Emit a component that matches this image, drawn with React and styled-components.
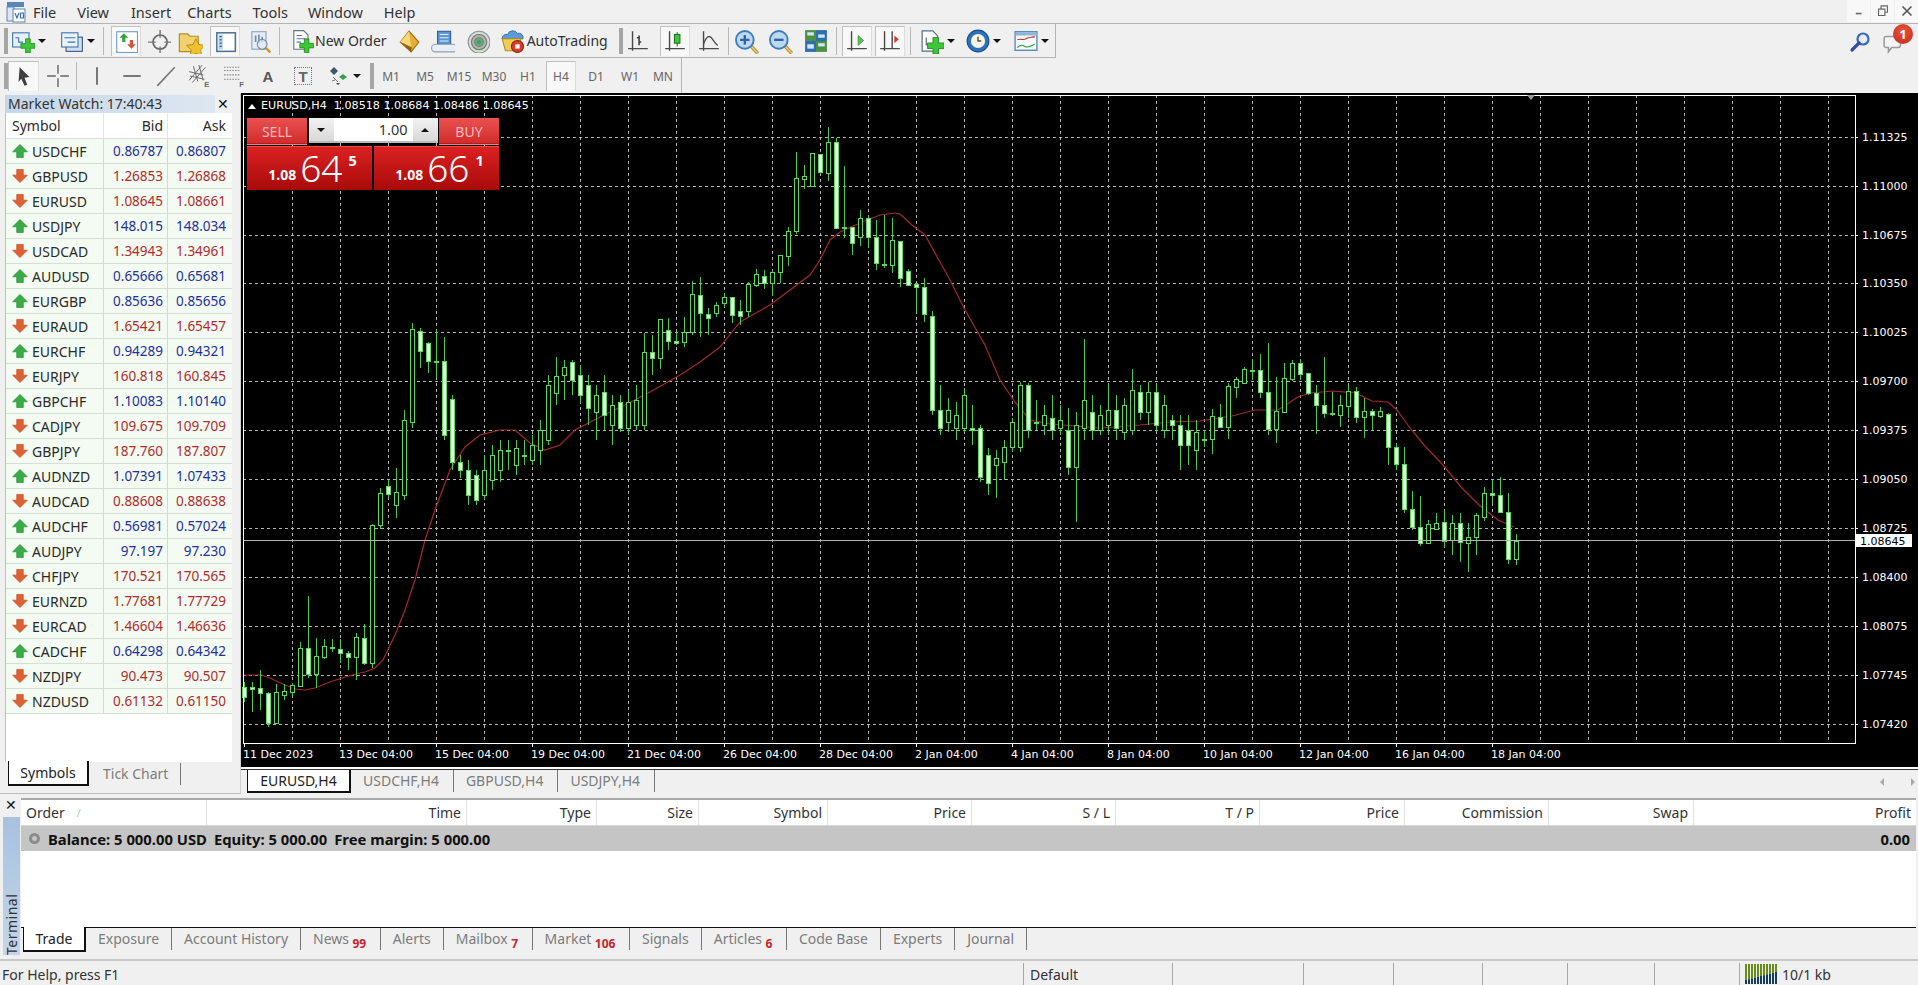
import React from 'react';
import styled, { createGlobalStyle } from 'styled-components';

const GlobalStyle = createGlobalStyle`
  html, body {
    margin: 0;
    padding: 0;
    background: #f0f0f0;
    overflow: hidden;
  }
  * {
    box-sizing: border-box;
  }
`;

const Page = styled.div`
  width: 1918px;
  height: 985px;
  display: flex;
  flex-direction: column;
  overflow: hidden;
  background: #f0f0f0;
  color: #222;
  font-family: 'Noto Sans', 'Open Sans', sans-serif;
  font-size: 14px;
`;

/* menu */
const MenuBar = styled.div`
  height: 24px;
  display: flex;
  align-items: center;
  padding-left: 5px;
  border-bottom: 1px solid #b4b4b4;
`;

const MenuItem = styled.span`
  font-size: 14.5px;
  color: #333;
  margin-left: ${(p) => p.$ml}px;
  line-height: 22px;
`;

const WindowButtons = styled.div`
  margin-left: auto;
  display: flex;
  gap: 1px;
  align-self: flex-start;
`;

const WindowButton = styled.div`
  width: 23px;
  height: 22px;
  background: #f8f8f8;
  display: flex;
  align-items: center;
  justify-content: center;
`;

/* toolbars */
const ToolRow = styled.div`
  height: ${(p) => p.$h}px;
  display: flex;
`;

const Toolbar = styled.div`
  width: ${(p) => p.$w}px;
  display: flex;
  align-items: center;
  border-right: 1px solid #b4b4b4;
  border-bottom: ${(p) => (p.$last ? '0' : '1px solid #b4b4b4')};
`;

const Grip = styled.div`
  width: 4px;
  height: 26px;
  margin-left: ${(p) => p.$ml || 0}px;
  background-image: radial-gradient(#a0a0a0 0.7px, transparent 0.8px);
  background-size: 2px 2px;
`;

const Sep = styled.div`
  width: 1px;
  height: 28px;
  margin-left: ${(p) => p.$ml || 0}px;
  background: #b8b8b8;
`;

const ToolButton = styled.div`
  width: ${(p) => p.$w || 30}px;
  height: 30px;
  flex: none;
  margin-left: ${(p) => p.$ml || 0}px;
  display: flex;
  align-items: center;
  justify-content: center;
  color: #666;
  font-size: 12px;
  background: ${(p) => (p.$on ? '#f8f8f8' : 'transparent')};
  border-top: 1px solid ${(p) => (p.$on ? '#c0c0c0' : 'transparent')};
  border-left: 1px solid ${(p) => (p.$on ? '#c0c0c0' : 'transparent')};
  border-right: 1px solid ${(p) => (p.$on ? '#dcdcdc' : 'transparent')};
`;

const DropButton = styled(ToolButton)`
  width: 41px;
  gap: 3px;
`;

const LabelButton = styled.div`
  height: 30px;
  flex: none;
  margin-left: ${(p) => p.$ml}px;
  padding: 0 4px;
  display: flex;
  align-items: center;
  gap: ${(p) => p.$gap}px;
  color: #333;
  font-size: 14px;
  white-space: nowrap;
`;

const Caret = styled.span`
  width: 0;
  height: 0;
  flex: none;
  border-left: 4px solid transparent;
  border-right: 4px solid transparent;
  border-top: 4px solid #111;
`;

const RightTools = styled.div`
  margin-left: auto;
  width: 69px;
  display: flex;
  align-items: center;
  gap: 12px;
  padding-top: 2px;
`;

const ChatWrap = styled.div`
  position: relative;
  width: 24px;
  height: 24px;
`;

const Badge = styled.div`
  position: absolute;
  left: 10px;
  top: -6px;
  width: 20px;
  height: 20px;
  border-radius: 50%;
  background: radial-gradient(circle at 50% 35%, #e8553c, #c3281c);
  color: #fff;
  font-size: 13px;
  font-weight: 700;
  display: flex;
  align-items: center;
  justify-content: center;
`;

/* main area */
const Main = styled.div`
  height: 705px;
  display: flex;
`;

const WatchPanel = styled.div`
  width: 241px;
  height: 701px;
  flex: none;
  padding: 2px 8px 0 5px;
  display: flex;
  flex-direction: column;
  border-bottom: 1px solid #bdbdbd;
  border-right: 1px solid #d0d0d0;
`;

const WatchTitle = styled.div`
  height: 18px;
  display: flex;
  align-items: center;
  justify-content: space-between;
  font-size: 14px;
  color: #333;
`;

const TitleFill = styled.div`
  width: 210px;
  height: 18px;
  padding-left: 3px;
  line-height: 18px;
  background: linear-gradient(90deg, #c5d6e8, #dde7f1);
`;

const CloseMark = styled.span`
  font-size: 14px;
  line-height: 14px;
  color: #111;
  margin-right: 3px;
`;

const WatchBody = styled.div`
  flex: 1;
  background: #fff;
  border-left: 1px solid #c0c0c0;
`;

const WatchRow = styled.div`
  display: grid;
  grid-template-columns: 98px 64px 1fr;
  height: ${(p) => (p.$head ? 26 : 25)}px;
  background: ${(p) => (p.$head ? '#fff' : '#f3fbf3')};
  border-bottom: 1px solid ${(p) => (p.$head ? '#dcdcdc' : '#d4e0d4')};
`;

const SymbolCell = styled.div`
  display: flex;
  align-items: center;
  gap: 3px;
  padding-left: ${(p) => (p.$head ? 6 : 5)}px;
  border-right: 1px solid ${(p) => (p.$head ? '#e6e6e6' : '#cfdccf')};
  color: #2a2a2a;
`;

const PriceCell = styled.div`
  display: flex;
  align-items: center;
  justify-content: flex-end;
  padding-right: ${(p) => (p.$ask ? 6 : 4)}px;
  font-size: ${(p) => (p.$head ? 14 : 13.5)}px;
  color: ${(p) => (p.$head ? '#2a2a2a' : p.$up ? '#24309a' : '#b02c2c')};
  border-right: ${(p) => (p.$ask ? '0' : '1px solid')} ${(p) => (p.$head ? '#e6e6e6' : '#cfdccf')};
`;

const TabStrip = styled.div`
  height: ${(p) => p.$h}px;
  flex: none;
  display: flex;
  align-items: ${(p) => (p.$top ? 'flex-start' : 'center')};
  padding-left: ${(p) => p.$pl || 0}px;
  border-top: ${(p) => (p.$line ? '1px solid #111' : '0')};
`;

const ActiveTab = styled.div`
  width: ${(p) => p.$w}px;
  height: ${(p) => p.$h}px;
  margin-top: -1px;
  flex: none;
  background: #fff;
  color: #222;
  display: flex;
  align-items: center;
  justify-content: center;
  border-left: 1px solid #111;
  border-right: 2px solid #111;
  border-bottom: 2px solid #111;
`;

const Tab = styled.div`
  height: 22px;
  margin-top: ${(p) => p.$mt || 0}px;
  padding: 0 ${(p) => p.$pr || 12}px 0 ${(p) => p.$pl || 12}px;
  flex: none;
  display: flex;
  align-items: flex-start;
  line-height: 22px;
  color: #7c7c7c;
  border-right: 1px solid #777;
  white-space: nowrap;
`;

const RedCount = styled.sup`
  color: #c4262e;
  font-size: 12px;
  font-weight: 700;
  line-height: 1;
  margin: 10px 1.5px 0 3.5px;
  vertical-align: baseline;
`;

const ChartColumn = styled.div`
  flex: 1;
  min-width: 0;
  display: flex;
  flex-direction: column;
`;

const ChartFrame = styled.div`
  position: relative;
  height: 677px;
  background: #000;
  border-bottom: 1px solid #333;
  box-shadow: inset 0 -2px 0 #fff;
`;

const ChartSvg = styled.svg`
  display: block;
`;

const ChartHeading = styled.div`
  position: absolute;
  left: 7px;
  top: 6px;
  display: flex;
  align-items: center;
  gap: 5px;
  color: #fff;
  font-family: 'DejaVu Sans', sans-serif;
  font-size: 11.15px;
  line-height: 14px;
  white-space: pre;
`;

const HeadingArrow = styled.span`
  width: 0;
  height: 0;
  border-left: 4px solid transparent;
  border-right: 4px solid transparent;
  border-bottom: 5px solid #fff;
`;

const ChartTabs = styled.div`
  flex: none;
  height: 24px;
  display: flex;
  padding-left: 6px;
`;

const ChartTabsNav = styled.div`
  margin-left: auto;
  width: 35px;
  margin-right: 3px;
  display: flex;
  justify-content: space-between;
  align-items: center;
`;

const NavArrow = styled.span`
  width: 0;
  height: 0;
  border-top: 4px solid transparent;
  border-bottom: 4px solid transparent;
  ${(p) => (p.$left ? 'border-right: 4px solid #aaa;' : 'border-left: 4px solid #aaa;')}
`;

/* one click trading overlay */
const TradePanel = styled.div`
  position: absolute;
  left: 6px;
  top: 25px;
  width: 251px;
  display: grid;
  grid-template-columns: 125px 125px;
  column-gap: 2px;
  row-gap: 1px;
  font-family: 'Noto Sans', sans-serif;
`;

const TradeTop = styled.div`
  grid-column: 1 / 3;
  height: 27px;
  display: flex;
  justify-content: space-between;
  align-items: flex-start;
`;

const SideButton = styled.div`
  width: 60px;
  height: 27px;
  background: linear-gradient(#ea5151, #d22a2a);
  color: #fbbcbc;
  font-size: 14px;
  display: flex;
  align-items: center;
  justify-content: center;
  border-bottom: 1px solid #f08080;
  box-shadow: inset 0 -1px 0 #b81c1c;
`;

const LotBox = styled.div`
  width: 129px;
  height: 25px;
  display: flex;
  background: #fff;
  color: #333;
  font-size: 14.5px;
  border-bottom: 2px solid #bbb;
`;

const LotStep = styled.div`
  width: 25px;
  background: linear-gradient(#f2f2f2, #d8d8d8);
  display: flex;
  align-items: center;
  justify-content: center;
`;

const LotStepArrow = styled.span`
  width: 0;
  height: 0;
  border-left: 4px solid transparent;
  border-right: 4px solid transparent;
  ${(p) => (p.$up ? 'border-bottom: 4px solid #111;' : 'border-top: 4px solid #111;')}
`;

const LotValue = styled.div`
  flex: 1;
  text-align: right;
  padding-right: 5px;
  line-height: 23px;
`;

const QuoteBox = styled.div`
  height: 44px;
  background: linear-gradient(#dc2222, #a80a0a);
  color: #fff;
  display: flex;
  align-items: flex-start;
  justify-content: center;
  padding-left: 6px;
  box-shadow: inset 0 1px 0 #e64a4a;
`;

const QuoteSmall = styled.span`
  font-size: 14px;
  font-weight: 700;
  margin-top: 20px;
  line-height: 18px;
`;

const QuoteBig = styled.span`
  font-size: 37px;
  font-weight: 300;
  line-height: 44px;
  margin: 0 6px 0 4px;
`;

const QuoteSup = styled.span`
  font-size: 14.5px;
  font-weight: 700;
  line-height: 14px;
  margin-top: 7px;
`;

/* terminal */
const Terminal = styled.div`
  height: 161px;
  display: flex;
`;

const TerminalRail = styled.div`
  width: 21px;
  flex: none;
  padding-left: 3px;
  display: flex;
  flex-direction: column;
`;

const RailClose = styled.div`
  height: 19px;
  line-height: 14px;
  font-size: 14px;
  padding-left: 2px;
  color: #111;
`;

const RailTitle = styled.div`
  width: 17px;
  height: 138px;
  background: linear-gradient(#c4d6ea, #a7c1de);
  writing-mode: vertical-rl;
  transform: rotate(180deg);
  line-height: 17px;
  font-size: 14px;
  letter-spacing: 0.5px;
  color: #333;
`;

const TerminalMain = styled.div`
  flex: 1;
  min-width: 0;
  display: flex;
  flex-direction: column;
  border-top: 2px solid #a8a8a8;
  margin-right: 2px;
`;

const OrdersHead = styled.div`
  height: 26px;
  flex: none;
  display: flex;
  background: #fff;
  border-bottom: 1px solid #d8d8d8;
`;

const OrdersCol = styled.div`
  width: ${(p) => p.$w}px;
  flex: ${(p) => (p.$grow ? 1 : 'none')};
  display: flex;
  align-items: center;
  justify-content: ${(p) => (p.$left ? 'flex-start' : 'flex-end')};
  padding: 0 5px;
  color: #333;
  border-right: ${(p) => (p.$grow ? '0' : '1px solid #e2e2e2')};
`;

const SortMark = styled.span`
  margin-left: 12px;
  color: #bbb;
  font-size: 11px;
`;

const BalanceRow = styled.div`
  height: 25px;
  flex: none;
  display: flex;
  align-items: center;
  padding: 0 6px 0 8px;
  background: #c5c5c5;
  font-weight: 700;
  color: #111;
  font-size: 14.8px;
`;

const BalanceDot = styled.span`
  width: 11px;
  height: 11px;
  border-radius: 50%;
  margin-right: 8px;
  border: 3px solid #8c8c8c;
  background: #c5c5c5;
`;

const BalanceText = styled.span`
  margin-right: 7px;
`;

const BalanceProfit = styled.span`
  margin-left: auto;
`;

const OrdersBlank = styled.div`
  flex: 1;
  background: #fff;
`;

/* status bar */
const StatusBar = styled.div`
  height: 26px;
  flex: none;
  display: flex;
  border-top: 2px solid #c8c8c8;
  align-items: flex-end;
`;

const StatusCell = styled.div`
  width: ${(p) => p.$w}px;
  height: 22px;
  flex: ${(p) => (p.$grow ? 1 : 'none')};
  display: flex;
  align-items: center;
  gap: 5px;
  padding-left: ${(p) => p.$pl}px;
  border-right: ${(p) => (p.$end ? '0' : '1px solid #a8a8a8')};
  color: #333;
  white-space: nowrap;
`;

/* icons */
const Ico = styled.svg`
  display: block;
  flex: none;
`;

const I = ({ children, s = 22 }) => (
  <Ico width={s} height={s} viewBox="0 0 22 22">
    {children}
  </Ico>
);

const Plus = ({ x = 9, y = 9, s = 12 }) => (
  <path
    d={`M${x + s / 3} ${y}h${s / 3}v${s / 3}h${s / 3}v${s / 3}h${-s / 3}v${s / 3}h${-s / 3}v${-s / 3}h${-s / 3}v${-s / 3}h${s / 3}z`}
    fill="#3fc53a"
    stroke="#1b8a1b"
    strokeWidth="0.7"
  />
);

const AppLogo = () => (
  <I>
    <rect x="2" y="1" width="17" height="5" fill="#5a85b8" />
    <rect x="2" y="6" width="7" height="14" fill="#dfe8f2" stroke="#5a85b8" />
    <rect x="8" y="8" width="12" height="13" fill="#fff" stroke="#5a85b8" />
    <path d="M10 12l2 5 2-5M15.500 12h3v5h-3z" fill="none" stroke="#3c6ea6" strokeWidth="1.200" />
  </I>
);
const NewChartIcon = () => (
  <I s={24}>
    <rect x="1.500" y="3.500" width="15" height="13" fill="#e7f0f9" stroke="#3f74ad" />
    <path d="M4 8h3v4h4" fill="none" stroke="#3f74ad" />
    <Plus x={9} y={9} s={13} />
  </I>
);
const ProfilesIcon = () => (
  <I s={24}>
    <rect x="5.500" y="7.500" width="15" height="13" fill="#cfdff0" stroke="#39587e" />
    <rect x="1.500" y="3.500" width="15" height="13" fill="#e9f1f9" stroke="#3f74ad" />
    <path d="M4 8h10M7 12h7" stroke="#3f74ad" />
  </I>
);
const WatchIcon = () => (
  <I s={24}>
    <rect x="2.500" y="2.500" width="19" height="19" fill="#fff" stroke="#6f9bc8" />
    <path d="M9 4l4 4h-2.500v4h-3V8H5z" fill="#35a53a" />
    <path d="M14.500 10h3v4H20l-4 4-4-4h2.500z" fill="#d2563c" />
  </I>
);
const NavIcon = () => (
  <I s={24}>
    <circle cx="12" cy="12" r="6.500" fill="none" stroke="#6a6a6a" strokeWidth="1.600" />
    <path d="M12 1v7M12 16v7M1 12h7M16 12h7" stroke="#757575" strokeWidth="1.300" />
  </I>
);
const StarFolderIcon = () => (
  <I s={26}>
    <path d="M2 5h7l2 2h7v13H2z" fill="#f1d26f" stroke="#b18e2a" />
    <path d="M16 9l2.500 5 5.500.7-4 3.800 1 5.500-5-2.700-5 2.700 1-5.500-4-3.800 5.500-.7z" fill="#f0c12e" stroke="#a88417" strokeWidth="0.700" />
  </I>
);
const TerminalIcon = () => (
  <I s={24}>
    <rect x="3.500" y="3.500" width="17" height="17" fill="#fff" stroke="#4d6f94" strokeWidth="1.400" />
    <rect x="5" y="5" width="4" height="14" fill="#bcd2e8" />
    <path d="M6 7h2M6 10h2M6 13h2M6 16h2" stroke="#2b5d91" strokeWidth="1.200" />
  </I>
);
const TesterIcon = () => (
  <I s={24}>
    <rect x="3.500" y="2.500" width="13" height="16" fill="#e6edf5" stroke="#8aa3bd" />
    <path d="M7 6v6M10 5v8M13 7v5" stroke="#6b8bab" strokeWidth="1.500" />
    <circle cx="13" cy="14" r="4.500" fill="#dce9f6" fillOpacity="0.700" stroke="#7a8da0" />
    <path d="M16.500 17.500l4 4" stroke="#c99a2e" strokeWidth="2.200" />
  </I>
);
const NewOrderIcon = () => (
  <I s={24}>
    <path d="M3.500 1.500h9l4 4v13h-13z" fill="#fdfdfd" stroke="#66707c" />
    <path d="M6 6h5M6 9h8M6 12h4" stroke="#5a7fa6" />
    <Plus x={9} y={9} s={12.500} />
  </I>
);
const EditorIcon = () => (
  <I s={24}>
    <path d="M11 2l9 10-7 9-10-9z" fill="#e5ad36" stroke="#9a6d13" />
    <path d="M11 2l-8 10 10 4z" fill="#f6d878" />
    <path d="M3 12l10 9 .500-4z" fill="#8e5f10" />
  </I>
);
const CloudBookIcon = () => (
  <I s={24}>
    <path d="M6 2h12v12H6z" fill="#5f96cf" stroke="#2c5f9c" />
    <path d="M8 5h8M8 8h8M8 11h8" stroke="#dcebf8" />
    <path d="M4 21a3.500 3.500 0 0 1 0-7h16a3.500 3.500 0 0 1 0 7z" fill="#e8eef4" stroke="#8aa0b5" />
  </I>
);
const SignalIcon = () => (
  <I s={24}>
    <circle cx="12" cy="12" r="10" fill="#d8dcd8" stroke="#8c948c" />
    <circle cx="12" cy="12" r="7" fill="#aeb6ae" stroke="#707870" />
    <circle cx="12" cy="12" r="4" fill="#7f9f85" stroke="#5f8f6a" />
    <circle cx="12" cy="12" r="2" fill="#3aa55a" />
  </I>
);
const AutoIcon = () => (
  <I s={24}>
    <path d="M7 5a5 5 0 0 1 9-1 4 4 0 0 1 5 5H2a4 4 0 0 1 5-4z" fill="#5d9bd6" stroke="#2d66a8" strokeWidth="0.800" />
    <path d="M2 9h17l-2 11H5z" fill="#f0cd55" stroke="#b08a22" />
    <circle cx="16" cy="16" r="5.500" fill="#dc3a2a" stroke="#8f1d12" />
    <rect x="14" y="14" width="4" height="4" fill="#fff" />
  </I>
);
const Axes = () => <path d="M6 2v18M2 18h18" stroke="#4a4a4a" strokeWidth="1.300" fill="none" />;
const BarIcon = () => (
  <I s={24}>
    <Axes />
    <path d="M12 6v9M10 8h2M12 12h2" stroke="#3a3a3a" strokeWidth="1.400" />
  </I>
);
const CandleIcon = () => (
  <I s={24}>
    <Axes />
    <path d="M13 3v13" stroke="#1a7a1a" />
    <rect x="10.500" y="5" width="5" height="8" fill="#43c243" stroke="#1a7a1a" />
  </I>
);
const LineIcon = () => (
  <I s={24}>
    <Axes />
    <path d="M6 14c3-9 6-8 8-5s3 5 5 6" stroke="#4a4a4a" strokeWidth="1.200" fill="none" />
  </I>
);
const ZoomIcon = ({ plus }) => (
  <I s={26}>
    <path d="M15 15l6 6.500" stroke="#b99433" strokeWidth="3" />
    <path d="M15 15l6 6.500" stroke="#ecd383" strokeWidth="1" />
    <circle cx="10" cy="10" r="7.500" fill="#bcd9f2" stroke="#3e7cc0" strokeWidth="1.600" />
    <path d={plus ? 'M6 10h8M10 6v8' : 'M6 10h8'} stroke="#2d62a5" strokeWidth="2" />
  </I>
);
const TileIcon = () => (
  <I s={24}>
    <rect x="1" y="1" width="10" height="10" fill="#4f8f44" />
    <rect x="11" y="1" width="10" height="10" fill="#2e6fb2" />
    <rect x="1" y="11" width="10" height="10" fill="#2e6fb2" />
    <rect x="11" y="11" width="10" height="10" fill="#4f8f44" />
    <rect x="3" y="3" width="6" height="3" fill="#cfe6f5" />
    <rect x="13" y="5" width="6" height="3" fill="#cfe6f5" />
    <rect x="3" y="14" width="6" height="4" fill="#cfe6f5" />
    <rect x="13" y="13" width="6" height="3" fill="#cfe6f5" />
  </I>
);
const ScrollIcon = () => (
  <I s={24}>
    <Axes />
    <path d="M12 6l5 4.500-5 4.500z" fill="#54c254" stroke="#2a8f2a" strokeWidth="0.600" />
  </I>
);
const ShiftIcon = () => (
  <I s={24}>
    <Axes />
    <path d="M13 2v16" stroke="#4a4a4a" strokeWidth="1.300" />
    <path d="M15 6l4 3.500-4 3.500z" fill="#d8342c" />
  </I>
);
const TemplateIcon = () => (
  <I s={26}>
    <path d="M3.500 2.500h9l4 4v13h-13z" fill="#fdfdfd" stroke="#5f6a75" />
    <path d="M7 8v6h5" fill="none" stroke="#666" />
    <Plus x={8} y={8} s={14} />
  </I>
);
const ClockIcon = () => (
  <I s={24}>
    <circle cx="11" cy="11" r="10" fill="#2e72bd" stroke="#1d4f8f" />
    <circle cx="11" cy="11" r="6.500" fill="#f8f6e8" />
    <path d="M11 7v4h3" stroke="#6c4a20" strokeWidth="1.300" fill="none" />
  </I>
);
const IndicatorIcon = () => (
  <I s={24}>
    <rect x="1" y="2.500" width="20" height="17" fill="#f6fafc" stroke="#4f85b5" strokeWidth="1.200" />
    <rect x="1.500" y="3" width="19" height="3" fill="#8fb6da" />
    <path d="M3 10c3-2 5 1 8-1s5-1 8-2" stroke="#c0392b" fill="none" />
    <path d="M3 17c3-2 4-3 7-1s6-1 9-2" stroke="#2f9a3f" fill="none" />
  </I>
);
const PointerIcon = () => (
  <I s={24}>
    <path d="M7 3l9 9-4.500 .500 2.500 6.500-2.500 1-3-6.500-2.500 3z" fill="#3f3f3f" />
  </I>
);
const CrossIcon = () => (
  <I s={24}>
    <path d="M11 1v8M11 13v8M1 11h8M13 11h8" stroke="#666" strokeWidth="1.300" />
  </I>
);
const VLineIcon = () => (
  <I s={24}>
    <path d="M11 3v16" stroke="#666" strokeWidth="1.600" />
  </I>
);
const HLineIcon = () => (
  <I s={24}>
    <path d="M3 11h16" stroke="#666" strokeWidth="1.600" />
  </I>
);
const TrendIcon = () => (
  <I s={24}>
    <path d="M3 20L19 3" stroke="#777" strokeWidth="1.500" />
  </I>
);
const SmallLetter = styled.text`
  font-family: 'Liberation Sans', sans-serif;
  font-weight: 700;
  font-size: 7px;
  fill: #666;
`;
const ChannelIcon = () => (
  <I s={24}>
    <path d="M1 15L13 1M4 17L16 3M1 7l13 3M2 11l13 3M5 2l4 14M10 1l4 14" stroke="#6a6a6a" strokeWidth="0.900" />
    <SmallLetter x="15" y="21">E</SmallLetter>
  </I>
);
const FiboIcon = () => (
  <I s={24}>
    <path d="M1 3h15M1 6h15M1 10h15M1 14h15" stroke="#8a8a8a" strokeDasharray="1.500 1" />
    <SmallLetter x="15" y="21">F</SmallLetter>
  </I>
);
const TextLabelIcon = styled.span`
  font-family: 'Liberation Sans', sans-serif;
  font-weight: 700;
  font-size: 15px;
  color: #555;
`;
const TextBoxIcon = styled.span`
  width: 18px;
  height: 18px;
  border: 1px dotted #777;
  display: flex;
  align-items: center;
  justify-content: center;
  font-family: 'Liberation Sans', sans-serif;
  font-weight: 700;
  font-size: 15px;
  color: #666;
  line-height: 1;
`;
const ArrowsIcon = () => (
  <I s={22}>
    <path d="M2 6l4-4 4 4-4 4z" fill="#3f5568" />
    <path d="M11 12l4-3 4 3-4 3z" fill="#37a050" />
    <path d="M5 12l5 5M7 15l-3 1" stroke="#777" />
    <path d="M8 18l2 2 2-2z" fill="#444" />
  </I>
);
const SearchIcon = () => (
  <I s={22}>
    <circle cx="14" cy="8" r="5.500" fill="#e6effa" stroke="#3a66c0" strokeWidth="2.200" />
    <path d="M10 12l-7 7" stroke="#33509f" strokeWidth="3.200" strokeLinecap="round" />
  </I>
);
const ChatIcon = () => (
  <I s={24}>
    <path d="M3 6h11a2 2 0 0 1 2 2v6a2 2 0 0 1-2 2H8l-3 4v-4H3a2 2 0 0 1-2-2V8a2 2 0 0 1 2-2z" fill="#f3f3f3" stroke="#9a9a9a" strokeWidth="1.400" />
  </I>
);
const ArrowMark = ({ up }) => (
  <I s={18}>
    {up ? (
      <path d="M11 3l9 9h-5v7H7v-7H2z" fill="#3bab45" stroke="#1f8a31" strokeWidth="0.800" />
    ) : (
      <path d="M7 3h8v7h5l-9 9-9-9h5z" fill="#de6134" stroke="#bf4a22" strokeWidth="0.800" />
    )}
  </I>
);
const RateBars = () => (
  <Ico width="32" height="20" viewBox="0 0 32 20">
    {[0, 1, 2, 3, 4, 5, 6, 7, 8, 9, 10].map((i) => (
      <g key={i}>
        <rect x={i * 3} y="0" width="2" height={8 + (10 - i) * 0.8} fill="#6b8a1c" />
        <rect x={i * 3} y={8 + (10 - i) * 0.8} width="2" height={12 - (10 - i) * 0.8} fill="#123d5c" />
      </g>
    ))}
  </Ico>
);

/* data */
const rows = [
  ['USDCHF', '0.86787', '0.86807', 1],
  ['GBPUSD', '1.26853', '1.26868', 0],
  ['EURUSD', '1.08645', '1.08661', 0],
  ['USDJPY', '148.015', '148.034', 1],
  ['USDCAD', '1.34943', '1.34961', 0],
  ['AUDUSD', '0.65666', '0.65681', 1],
  ['EURGBP', '0.85636', '0.85656', 1],
  ['EURAUD', '1.65421', '1.65457', 0],
  ['EURCHF', '0.94289', '0.94321', 1],
  ['EURJPY', '160.818', '160.845', 0],
  ['GBPCHF', '1.10083', '1.10140', 1],
  ['CADJPY', '109.675', '109.709', 0],
  ['GBPJPY', '187.760', '187.807', 0],
  ['AUDNZD', '1.07391', '1.07433', 1],
  ['AUDCAD', '0.88608', '0.88638', 0],
  ['AUDCHF', '0.56981', '0.57024', 1],
  ['AUDJPY', '97.197', '97.230', 1],
  ['CHFJPY', '170.521', '170.565', 0],
  ['EURNZD', '1.77681', '1.77729', 0],
  ['EURCAD', '1.46604', '1.46636', 0],
  ['CADCHF', '0.64298', '0.64342', 1],
  ['NZDJPY', '90.473', '90.507', 0],
  ['NZDUSD', '0.61132', '0.61150', 0],
];

const priceLabels = [
  '1.11325', '1.11000', '1.10675', '1.10350', '1.10025', '1.09700', '1.09375',
  '1.09050', '1.08725', '1.08400', '1.08075', '1.07745', '1.07420',
];

const timeLabels = [
  '11 Dec 2023', '13 Dec 04:00', '15 Dec 04:00', '19 Dec 04:00', '21 Dec 04:00',
  '26 Dec 04:00', '28 Dec 04:00', '2 Jan 04:00', '4 Jan 04:00', '8 Jan 04:00',
  '10 Jan 04:00', '12 Jan 04:00', '16 Jan 04:00', '18 Jan 04:00',
];

// white body, body top, body bottom, high, low (page y)
const candles = [
  [1, 687, 697, 682, 702], [1, 687, 689, 682, 712], [1, 688, 693, 670, 710], [1, 693, 723, 692, 727],
  [0, 692, 723, 684, 724], [0, 691, 695, 684, 700], [0, 685, 692, 683, 697], [0, 648, 686, 642, 687],
  [1, 648, 674, 596, 678], [0, 656, 674, 638, 688], [0, 646, 657, 639, 659], [1, 647, 648, 639, 652],
  [1, 649, 653, 639, 663], [1, 653, 657, 651, 670], [0, 637, 657, 633, 680], [1, 638, 663, 624, 665],
  [0, 525, 663, 524, 668], [0, 493, 525, 488, 529], [1, 486, 494, 480, 498], [0, 492, 505, 468, 518],
  [0, 420, 495, 410, 500], [0, 329, 422, 323, 428], [1, 331, 351, 328, 368], [1, 343, 361, 342, 373],
  [1, 361, 362, 330, 378], [1, 361, 435, 337, 440], [1, 399, 462, 395, 470], [1, 462, 470, 455, 478],
  [1, 470, 495, 460, 505], [1, 475, 500, 470, 505], [0, 470, 495, 455, 500], [0, 455, 480, 445, 490],
  [0, 450, 470, 440, 482], [1, 450, 451, 440, 470], [0, 448, 465, 440, 475], [1, 455, 456, 440, 465],
  [0, 445, 460, 435, 465], [0, 430, 450, 420, 465], [0, 385, 440, 375, 445], [0, 376, 393, 357, 405],
  [0, 367, 375, 360, 400], [1, 362, 380, 360, 395], [1, 375, 395, 365, 402], [1, 385, 408, 375, 425],
  [0, 395, 412, 385, 440], [1, 392, 415, 375, 430], [0, 405, 425, 395, 445], [1, 402, 428, 395, 432],
  [0, 402, 428, 390, 435], [0, 400, 425, 385, 430], [0, 352, 425, 333, 430], [1, 352, 358, 335, 375],
  [0, 319, 358, 319, 369], [1, 330, 341, 318, 350], [1, 341, 343, 332, 345], [0, 332, 342, 317, 347],
  [0, 294, 332, 281, 335], [1, 295, 313, 277, 337], [1, 314, 318, 308, 335], [0, 305, 313, 302, 317],
  [0, 297, 303, 293, 307], [1, 297, 315, 297, 323], [1, 311, 316, 300, 325], [0, 284, 311, 282, 317],
  [0, 274, 285, 269, 287], [1, 276, 283, 270, 289], [0, 272, 283, 270, 296], [0, 255, 272, 255, 283],
  [0, 231, 256, 227, 266], [0, 178, 231, 152, 234], [0, 176, 179, 165, 189], [0, 153, 186, 153, 186],
  [1, 154, 172, 154, 174], [0, 142, 173, 127, 181], [1, 142, 228, 138, 229], [1, 227, 228, 166, 238],
  [1, 227, 243, 227, 255], [0, 218, 237, 210, 246], [1, 218, 237, 215, 247], [1, 237, 263, 220, 270],
  [1, 264, 265, 215, 268], [0, 240, 265, 218, 273], [1, 241, 278, 241, 287], [1, 271, 285, 269, 285],
  [1, 284, 287, 283, 313], [1, 287, 314, 278, 322], [1, 316, 410, 311, 415], [1, 410, 428, 385, 435],
  [0, 410, 422, 398, 432], [0, 415, 428, 402, 440], [0, 395, 428, 388, 432], [1, 428, 430, 405, 445],
  [1, 428, 477, 425, 482], [1, 455, 483, 448, 495], [0, 458, 465, 450, 498], [0, 447, 462, 440, 480],
  [0, 422, 447, 418, 452], [0, 385, 447, 382, 452], [1, 385, 430, 383, 438], [1, 422, 423, 400, 430],
  [0, 415, 425, 405, 435], [1, 418, 430, 395, 440], [0, 420, 428, 405, 435], [1, 430, 467, 408, 475],
  [0, 425, 467, 412, 522], [0, 400, 428, 339, 440], [1, 412, 430, 395, 440], [0, 415, 430, 405, 435],
  [0, 410, 425, 385, 435], [1, 410, 428, 395, 440], [0, 405, 432, 398, 440], [0, 390, 430, 369, 435],
  [1, 392, 412, 385, 420], [0, 392, 412, 382, 425], [1, 392, 425, 385, 432], [0, 405, 430, 395, 438],
  [1, 420, 425, 415, 440], [1, 425, 445, 415, 470], [1, 430, 445, 415, 465], [0, 432, 450, 420, 470],
  [0, 439, 440, 430, 447], [0, 416, 439, 409, 454], [1, 417, 427, 404, 428], [0, 386, 427, 383, 439],
  [0, 379, 387, 377, 398], [0, 369, 383, 367, 384], [1, 370, 371, 359, 380], [1, 370, 392, 354, 398],
  [1, 392, 429, 343, 435], [0, 411, 429, 377, 443], [0, 378, 412, 363, 413], [0, 363, 379, 360, 381],
  [1, 363, 374, 359, 380], [1, 373, 393, 373, 395], [1, 393, 405, 385, 434], [1, 405, 413, 357, 418],
  [1, 413, 414, 392, 416], [0, 405, 415, 395, 427], [0, 391, 406, 385, 418], [1, 391, 417, 387, 423],
  [0, 411, 417, 398, 438], [1, 411, 415, 409, 430], [0, 411, 416, 407, 418], [1, 414, 447, 413, 465],
  [1, 447, 464, 444, 470], [1, 464, 509, 447, 513], [1, 509, 527, 491, 530], [1, 527, 543, 496, 546],
  [0, 524, 543, 520, 544], [0, 523, 529, 513, 530], [1, 522, 541, 510, 548], [0, 523, 540, 515, 555],
  [1, 523, 542, 513, 562], [0, 537, 543, 523, 572], [0, 515, 537, 513, 555], [0, 493, 517, 487, 521],
  [1, 493, 495, 480, 503], [1, 495, 512, 477, 513], [1, 512, 559, 493, 564], [0, 541, 559, 534, 565],
];

const maPoints = [
  [243, 675], [262, 675], [270, 678], [285, 685], [295, 689], [305, 690], [315, 688], [330, 682],
  [345, 677], [360, 673], [365, 672], [375, 668], [383, 660], [395, 635], [405, 610], [415, 580],
  [425, 540], [435, 510], [450, 470], [465, 447], [480, 435], [500, 430], [515, 430], [530, 443],
  [545, 450], [560, 445], [575, 430], [600, 417], [625, 405], [650, 392], [680, 375], [700, 362],
  [720, 347], [740, 322], [770, 305], [790, 290], [810, 275], [820, 260], [830, 240], [840, 232],
  [860, 223], [880, 215], [895, 213], [900, 214], [912, 225], [925, 235], [940, 262], [950, 280],
  [965, 310], [985, 345], [1000, 380], [1015, 402], [1030, 420], [1050, 424], [1100, 428], [1140, 425],
  [1170, 422], [1200, 421], [1232, 416], [1255, 410], [1278, 410], [1298, 397], [1310, 393], [1333, 391],
  [1356, 393], [1372, 401], [1388, 402], [1397, 410], [1410, 428], [1424, 445], [1443, 465], [1461, 487],
  [1479, 505], [1498, 520], [1514, 527],
];

const CHART_LEFT = 243;
const CHART_RIGHT = 1855;
const CHART_TOP = 95;
const CHART_BOTTOM = 743;

const vGrid = [];
for (let x = 292; x < CHART_RIGHT; x += 48) vGrid.push(x);

const priceY = (i) => Math.round(136.7 + i * 48.9);

const AxisText = styled.text`
  font-family: 'DejaVu Sans', sans-serif;
  font-size: 11px;
  fill: ${(p) => p.$fill || '#fff'};
`;

function PriceChart() {
  return (
    <ChartSvg width="1677" height="674" viewBox="241 93 1677 674">
      <g shapeRendering="crispEdges">
        {vGrid.map((x) => (
          <path key={x} d={`M${x + 0.5} ${CHART_TOP}V${CHART_BOTTOM}`} stroke="#b4b4b4" strokeDasharray="3 3" />
        ))}
        {priceLabels.map((label, i) => (
          <path key={label} d={`M${CHART_LEFT} ${priceY(i) + 0.5}H${CHART_RIGHT}`} stroke="#b4b4b4" strokeDasharray="3 3" />
        ))}
      </g>
      <polyline
        points={maPoints.map((p) => p.join(',')).join(' ')}
        fill="none"
        stroke="#a32a2e"
        strokeWidth="1.200"
      />
      <g shapeRendering="crispEdges">
        {candles.map(([white, top, bot, hi, lo], k) => {
          const x = 244 + k * 8;
          return (
            <g key={k}>
              <path d={`M${x + 0.5} ${hi}V${lo}`} stroke="#4cc64c" />
              <rect
                x={x - 1.5}
                y={top + 0.5}
                width="4"
                height={Math.max(bot - top, 1)}
                fill={white ? '#e6ffe0' : '#000'}
                stroke="#62d462"
              />
            </g>
          );
        })}
        <path d={`M${CHART_LEFT} 540.500H${CHART_RIGHT}`} stroke="#b4b4b4" />
        <rect x={CHART_LEFT + 0.5} y={CHART_TOP + 0.5} width={CHART_RIGHT - CHART_LEFT} height={CHART_BOTTOM - CHART_TOP} fill="none" stroke="#fff" />
        {priceLabels.map((label, i) => (
          <path key={label} d={`M${CHART_RIGHT} ${priceY(i) + 0.5}h3`} stroke="#fff" />
        ))}
        {timeLabels.map((label, i) => (
          <path key={label} d={`M${244.5 + i * 96} ${CHART_BOTTOM}v4`} stroke="#fff" />
        ))}
        <rect x="1856" y="534" width="56" height="13" fill="#fff" />
      </g>
      <path d="M1527 95h8l-4 5z" fill="#9a9a9a" />
      {priceLabels.map((label, i) => (
        <AxisText key={label} x="1862" y={priceY(i) + 4}>
          {label}
        </AxisText>
      ))}
      <AxisText x="1860" y="545" $fill="#000">
        1.08645
      </AxisText>
      {timeLabels.map((label, i) => (
        <AxisText key={label} x={243 + i * 96} y="758">
          {label}
        </AxisText>
      ))}
    </ChartSvg>
  );
}

const menus = [
  ['File', 6],
  ['View', 21],
  ['Insert', 22],
  ['Charts', 16],
  ['Tools', 21],
  ['Window', 20],
  ['Help', 21],
];

const timeframes = [
  ['M1', 2],
  ['M5', 4],
  ['M15', 4],
  ['M30', 5],
  ['H1', 4],
  ['H4', 3, true],
  ['D1', 5],
  ['W1', 4],
  ['MN', 3],
];

const orderCols = [
  ['Time', 260], ['Type', 130], ['Size', 102], ['Symbol', 129], ['Price', 144], ['S / L', 144],
  ['T / P', 144], ['Price', 145], ['Commission', 144], ['Swap', 145],
];

const terminalTabs = [
  ['Exposure'],
  ['Account History'],
  ['News', '99'],
  ['Alerts'],
  ['Mailbox', '7'],
  ['Market', '106'],
  ['Signals'],
  ['Articles', '6'],
  ['Code Base'],
  ['Experts'],
  ['Journal'],
];

const statusWidths = [149, 131, 90, 89, 85, 87, 85];

export default function App() {
  return (
    <>
      <GlobalStyle />
      <Page>
        <MenuBar>
          <AppLogo />
          {menus.map(([name, ml]) => (
            <MenuItem key={name} $ml={ml}>
              {name}
            </MenuItem>
          ))}
          <WindowButtons>
            <WindowButton>
              <I s={14}><path d="M6 15h9" stroke="#666" strokeWidth="2.500" /></I>
            </WindowButton>
            <WindowButton>
              <I s={14}><path d="M8 7V3h10v10h-4M4 8h10v10H4z" stroke="#666" strokeWidth="1.800" fill="none" /></I>
            </WindowButton>
            <WindowButton>
              <I s={14}><path d="M4 4l14 14M18 4L4 18" stroke="#555" strokeWidth="2.500" /></I>
            </WindowButton>
          </WindowButtons>
        </MenuBar>

        <ToolRow $h={34}>
          <Toolbar $w={1056}>
            <Grip $ml={4} />
            <DropButton><NewChartIcon /><Caret /></DropButton>
            <DropButton $ml={8}><ProfilesIcon /><Caret /></DropButton>
            <Sep $ml={5} />
            <ToolButton $ml={7} $on><WatchIcon /></ToolButton>
            <ToolButton $ml={3}><NavIcon /></ToolButton>
            <ToolButton $ml={1}><StarFolderIcon /></ToolButton>
            <ToolButton $ml={5} $on><TerminalIcon /></ToolButton>
            <ToolButton $ml={5}><TesterIcon /></ToolButton>
            <Sep $ml={4} />
            <LabelButton $ml={6} $gap={1}><NewOrderIcon />New Order</LabelButton>
            <ToolButton $ml={3}><EditorIcon /></ToolButton>
            <ToolButton $ml={4}><CloudBookIcon /></ToolButton>
            <ToolButton $ml={5}><SignalIcon /></ToolButton>
            <LabelButton $ml={3} $gap={3}><AutoIcon />AutoTrading</LabelButton>
            <Grip $ml={7} />
            <ToolButton><BarIcon /></ToolButton>
            <ToolButton $ml={7} $on><CandleIcon /></ToolButton>
            <ToolButton $ml={4}><LineIcon /></ToolButton>
            <Sep $ml={4} />
            <ToolButton $ml={2}><ZoomIcon plus /></ToolButton>
            <ToolButton $ml={4}><ZoomIcon /></ToolButton>
            <ToolButton $ml={6}><TileIcon /></ToolButton>
            <Sep $ml={5} />
            <ToolButton $ml={5} $on><ScrollIcon /></ToolButton>
            <ToolButton $ml={3} $on><ShiftIcon /></ToolButton>
            <Sep $ml={5} />
            <DropButton $ml={5}><TemplateIcon /><Caret /></DropButton>
            <DropButton $ml={6}><ClockIcon /><Caret /></DropButton>
            <DropButton $ml={7}><IndicatorIcon /><Caret /></DropButton>
          </Toolbar>
          <RightTools>
            <SearchIcon />
            <ChatWrap>
              <ChatIcon />
              <Badge>1</Badge>
            </ChatWrap>
          </RightTools>
        </ToolRow>

        <ToolRow $h={35}>
          <Toolbar $w={682} $last>
            <Grip $ml={4} />
            <ToolButton $w={31} $on><PointerIcon /></ToolButton>
            <ToolButton $ml={4}><CrossIcon /></ToolButton>
            <Sep $ml={3} />
            <ToolButton $ml={5}><VLineIcon /></ToolButton>
            <ToolButton $ml={5}><HLineIcon /></ToolButton>
            <ToolButton $ml={4}><TrendIcon /></ToolButton>
            <ToolButton $ml={4}><ChannelIcon /></ToolButton>
            <ToolButton $ml={5}><FiboIcon /></ToolButton>
            <ToolButton $ml={3}><TextLabelIcon>A</TextLabelIcon></ToolButton>
            <ToolButton $ml={5}><TextBoxIcon>T</TextBoxIcon></ToolButton>
            <DropButton $ml={6}><ArrowsIcon /><Caret /></DropButton>
            <Grip $ml={5} />
            {timeframes.map(([name, ml, on]) => (
              <ToolButton key={name} $ml={ml} $on={on}>
                {name}
              </ToolButton>
            ))}
          </Toolbar>
        </ToolRow>

        <Main>
          <WatchPanel>
            <WatchTitle>
              <TitleFill>Market Watch: 17:40:43</TitleFill>
              <CloseMark>✕</CloseMark>
            </WatchTitle>
            <WatchBody>
              <WatchRow $head>
                <SymbolCell $head>Symbol</SymbolCell>
                <PriceCell $head>Bid</PriceCell>
                <PriceCell $head $ask>Ask</PriceCell>
              </WatchRow>
              {rows.map(([symbol, bid, ask, up]) => (
                <WatchRow key={symbol}>
                  <SymbolCell>
                    <ArrowMark up={up} />
                    {symbol}
                  </SymbolCell>
                  <PriceCell $up={up}>{bid}</PriceCell>
                  <PriceCell $up={up} $ask>{ask}</PriceCell>
                </WatchRow>
              ))}
            </WatchBody>
            <TabStrip $h={31} $pl={3} $top>
              <ActiveTab $w={81} $h={25}>Symbols</ActiveTab>
              <Tab $mt={1} $pl={14}>Tick Chart</Tab>
            </TabStrip>
          </WatchPanel>

          <ChartColumn>
            <ChartFrame>
              <PriceChart />
              <ChartHeading>
                <HeadingArrow />
                {'EURUSD,H4  1.08518 1.08684 1.08486 1.08645'}
              </ChartHeading>
              <TradePanel>
                <TradeTop>
                  <SideButton>SELL</SideButton>
                  <LotBox>
                    <LotStep><LotStepArrow /></LotStep>
                    <LotValue>1.00</LotValue>
                    <LotStep><LotStepArrow $up /></LotStep>
                  </LotBox>
                  <SideButton>BUY</SideButton>
                </TradeTop>
                <QuoteBox>
                  <QuoteSmall>1.08</QuoteSmall>
                  <QuoteBig>64</QuoteBig>
                  <QuoteSup>5</QuoteSup>
                </QuoteBox>
                <QuoteBox>
                  <QuoteSmall>1.08</QuoteSmall>
                  <QuoteBig>66</QuoteBig>
                  <QuoteSup>1</QuoteSup>
                </QuoteBox>
              </TradePanel>
            </ChartFrame>
            <ChartTabs>
              <ActiveTab $w={104} $h={24}>EURUSD,H4</ActiveTab>
              <Tab $pr={14}>USDCHF,H4</Tab>
              <Tab $pr={14}>GBPUSD,H4</Tab>
              <Tab $pr={14}>USDJPY,H4</Tab>
              <ChartTabsNav>
                <NavArrow $left />
                <NavArrow />
              </ChartTabsNav>
            </ChartTabs>
          </ChartColumn>
        </Main>

        <Terminal>
          <TerminalRail>
            <RailClose>✕</RailClose>
            <RailTitle>Terminal</RailTitle>
          </TerminalRail>
          <TerminalMain>
            <OrdersHead>
              <OrdersCol $w={186} $left>
                Order<SortMark>/</SortMark>
              </OrdersCol>
              {orderCols.map(([name, w], i) => (
                <OrdersCol key={i} $w={w}>
                  {name}
                </OrdersCol>
              ))}
              <OrdersCol $grow>Profit</OrdersCol>
            </OrdersHead>
            <BalanceRow>
              <BalanceDot />
              <BalanceText>Balance: 5 000.00 USD</BalanceText>
              <BalanceText>Equity: 5 000.00</BalanceText>
              <BalanceText>Free margin: 5 000.00</BalanceText>
              <BalanceProfit>0.00</BalanceProfit>
            </BalanceRow>
            <OrdersBlank />
            <TabStrip $h={32} $pl={2} $top $line>
              <ActiveTab $w={63} $h={25}>Trade</ActiveTab>
              {terminalTabs.map(([name, count]) => (
                <Tab key={name}>
                  {name}
                  {count && <RedCount>{count}</RedCount>}
                </Tab>
              ))}
            </TabStrip>
          </TerminalMain>
        </Terminal>

        <StatusBar>
          <StatusCell $w={1024} $pl={2}>For Help, press F1</StatusCell>
          <StatusCell $w={149} $pl={6}>Default</StatusCell>
          {statusWidths.slice(1).map((w, i) => (
            <StatusCell key={i} $w={w} $pl={0} />
          ))}
          <StatusCell $grow $end $pl={5}>
            <RateBars />
            10/1 kb
          </StatusCell>
        </StatusBar>
      </Page>
    </>
  );
}
